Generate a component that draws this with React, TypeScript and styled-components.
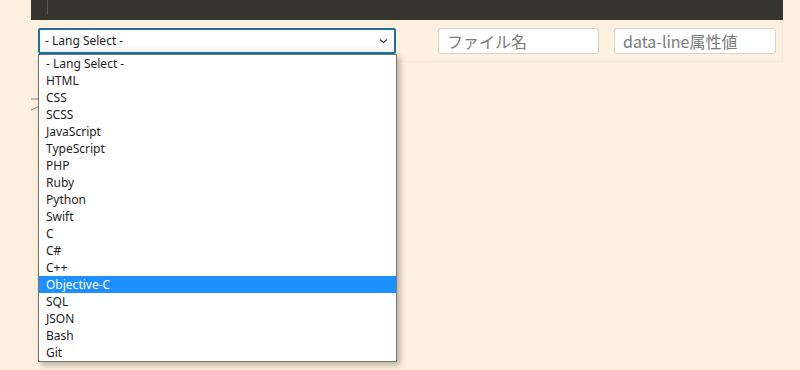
import React from "react";
import styled, { createGlobalStyle } from "styled-components";

const GlobalStyle = createGlobalStyle`
	body {
		margin: 0;
		background: #fdf0de;
		font-family: "Noto Sans", "Noto Sans CJK JP", sans-serif;
	}
`;

const Page = styled.div`
	width: 800px;
	height: 370px;
	overflow: hidden;
	padding-left: 31px;
	box-sizing: border-box;
	position: relative;
`;

const Editor = styled.div`
	width: 752px;
	height: 20px;
	background: #36352d;
	padding-left: 16px;
	box-sizing: border-box;
`;

const Caret = styled.div`
	width: 1px;
	height: 14px;
	background: #5d5c54;
`;

const Toolbar = styled.div`
	width: 752px;
	height: 42px;
	box-sizing: border-box;
	padding: 8px 6px 8px 7px;
	display: flex;
	align-items: center;
	border-right: 1px solid #f2e9dd;
	border-bottom: 1px solid #f2e9dd;
	position: relative;
	& > * {
		flex-shrink: 0;
	}
`;

const SelectBox = styled.div`
	width: 358px;
	height: 26px;
	box-sizing: border-box;
	border: 2px solid #1b6fa3;
	border-radius: 2px;
	background: linear-gradient(#ffffff 60%, #f3f3f3);
	display: flex;
	align-items: center;
	justify-content: space-between;
	padding: 0 6px 0 5px;
	font-size: 12px;
	color: #1d1d1d;
`;

const TextInput = styled.input<{ $w: number; $ml: number }>`
	width: ${(p) => p.$w}px;
	height: 26px;
	margin-left: ${(p) => p.$ml}px;
	box-sizing: border-box;
	border: 1px solid #d6d2cc;
	border-radius: 3px;
	background: #fff;
	padding: 0 8px;
	font-family: "Noto Sans CJK JP", "Noto Sans", sans-serif;
	font-size: 16px;
	&::placeholder {
		color: #7a7a7a;
	}
`;

const ListBox = styled.ul`
	position: absolute;
	left: 38px;
	top: 54px;
	width: 359px;
	margin: 0;
	padding: 0;
	list-style: none;
	box-sizing: border-box;
	background: #fff;
	border: 1px solid #767676;
	box-shadow: 3px 3px 6px rgba(60, 50, 40, 0.35);
	z-index: 2;
`;

const Option = styled.li<{ $active?: boolean }>`
	height: 17px;
	box-sizing: border-box;
	padding: 1px 0 0 7px;
	line-height: 16px;
	font-size: 12px;
	color: ${(p) => (p.$active ? "#fff" : "#1d1d1d")};
	background: ${(p) => (p.$active ? "#1e8fff" : "transparent")};
`;

const Hidden = styled.svg`
	position: absolute;
	left: 31px;
	top: 96px;
`;

const langs = [
	"- Lang Select -",
	"HTML",
	"CSS",
	"SCSS",
	"JavaScript",
	"TypeScript",
	"PHP",
	"Ruby",
	"Python",
	"Swift",
	"C",
	"C#",
	"C++",
	"Objective-C",
	"SQL",
	"JSON",
	"Bash",
	"Git",
];

export default function App() {
	return (
		<Page>
			<GlobalStyle />
			<Editor>
				<Caret />
			</Editor>
			<Toolbar>
				<SelectBox>
					<span>- Lang Select -</span>
					<svg width="9" height="6" viewBox="0 0 9 6">
						<path d="M1 1.5 L4.5 4.5 L8 1.5" stroke="#333" strokeWidth="1.2" fill="none" />
					</svg>
				</SelectBox>
				<TextInput $w={161} $ml={42} placeholder="ファイル名" />
				<TextInput $w={162} $ml={15} placeholder="data-line属性値" />
			</Toolbar>
			<Hidden width="8" height="16" viewBox="0 0 8 16">
				<path d="M0 3 H7" stroke="#8a857c" strokeWidth="1" />
				<path d="M0 14 Q4 12 7 11" stroke="#8a857c" strokeWidth="1" fill="none" />
			</Hidden>
			<ListBox>
				{langs.map((l) => (
					<Option key={l} $active={l === "Objective-C"}>
						{l}
					</Option>
				))}
			</ListBox>
		</Page>
	);
}
